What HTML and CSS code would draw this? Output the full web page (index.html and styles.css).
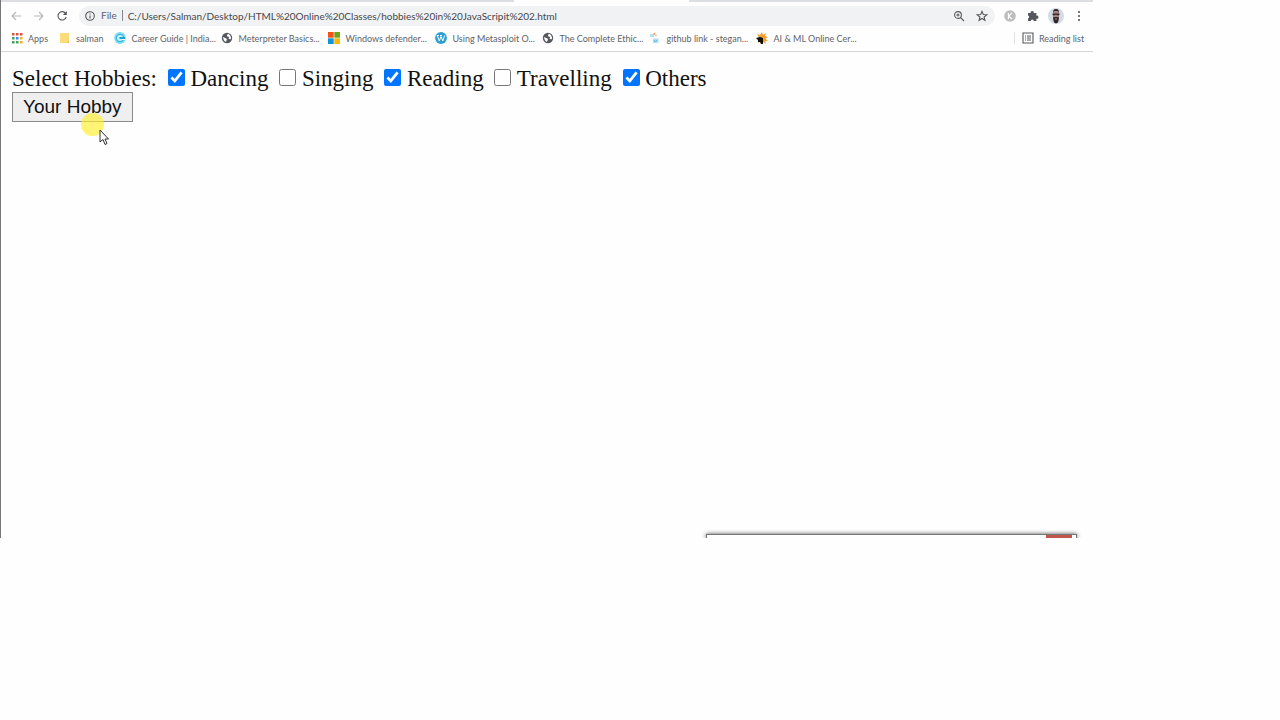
FILE: index.html
```html
<!DOCTYPE html>
<html lang="en">
<head>
    <meta charset="UTF-8">
    <meta name="viewport" content="width=device-width, initial-scale=1.0">
    <title>Hobbies in JavaScript</title>
    <link rel="stylesheet" href="styles.css">
</head>
<body>
    <div class="browser">
        <div class="tab-strip">
            <div class="active-tab"></div>
        </div>

        <div class="toolbar">
            <button class="icon-btn faded" aria-label="Back">
                <svg viewBox="0 0 12 12"><path d="M11 6H2M6 2L2 6l4 4"/></svg>
            </button>
            <button class="icon-btn faded" aria-label="Forward">
                <svg viewBox="0 0 12 12"><path d="M1 6h9M6 2l4 4-4 4"/></svg>
            </button>
            <button class="icon-btn" aria-label="Reload">
                <svg viewBox="0 0 12 12"><path d="M9.6 3.4A4.2 4.2 0 1 0 10.2 7"/><path class="solid" d="M10.8 1v4H6.8z"/></svg>
            </button>
            <div class="omnibox">
                <svg viewBox="0 0 12 12"><circle cx="6" cy="6" r="4.3"/><path d="M6 5.4v3M6 3.4v1.1"/></svg>
                <label for="address">File</label>
                <input type="text" id="address" value="C:/Users/Salman/Desktop/HTML%20Online%20Classes/hobbies%20in%20JavaScripit%202.html">
                <button class="icon-btn" aria-label="Zoom">
                    <svg viewBox="0 0 12 12"><circle cx="5" cy="5" r="3.4"/><path d="M7.6 7.6l3.4 3.4M3.4 5h3.2M5 3.4v3.2"/></svg>
                </button>
                <button class="icon-btn" aria-label="Bookmark this page">
                    <svg viewBox="0 0 12 12"><path d="M6 1.4l1.3 3.1 3.4.3-2.6 2.2.8 3.3L6 8.5l-2.9 1.8.8-3.3-2.6-2.2 3.4-.3z"/></svg>
                </button>
            </div>
            <button class="icon-btn" aria-label="Extension K">
                <svg viewBox="0 0 12 12"><circle class="grey" cx="6" cy="6" r="5.8"/><path class="letter" d="M4.4 3v6M8 3L4.6 6.2 8 9"/></svg>
            </button>
            <button class="icon-btn" aria-label="Extensions">
                <svg viewBox="0 0 12 12"><path class="solid" d="M1 3h2.8a1.5 1.5 0 1 1 2.8 0h2.8v2.8a1.5 1.5 0 1 1 0 2.8V11H6.8a1.5 1.5 0 0 0-3 0H1V8.4a1.5 1.5 0 0 0 0-2.9z"/></svg>
            </button>
            <button class="icon-btn avatar" aria-label="Profile">
                <svg viewBox="0 0 16 16"><circle cx="8" cy="8" r="8" fill="#d3dbe2"/><path d="M5 4q0-3 3-3t3 3v7q-1 4-3 4t-3-4z" fill="#a98486"/><path d="M5 5q0-4 3-4t3 4L10 3H6zM4.6 5.5h6.8v1.8H9L8 6.5l-1 .8H4.6zM5 9.5l2-.5h2l2 .5-1 5-2 1-2-1z" fill="#33272d"/><path d="M7 11h2" stroke="#a98486"/></svg>
            </button>
            <button class="icon-btn" aria-label="Menu">
                <svg viewBox="0 0 12 12"><circle class="solid" cx="6" cy="2" r="1.1"/><circle class="solid" cx="6" cy="6" r="1.1"/><circle class="solid" cx="6" cy="10" r="1.1"/></svg>
            </button>
        </div>

        <nav class="bookmarks">
            <a href="#" class="short">
                <svg viewBox="0 0 12 12"><path d="M1 1h2.5v2.5H1zM5 1h2.5v2.5H5zM9 1h2.5v2.5H9z" fill="#e0523f"/><path d="M1 5h2.5v2.5H1z" fill="#3fa35a"/><path d="M5 5h2.5v2.5H5z" fill="#4285f4"/><path d="M9 5h2.5v2.5H9z" fill="#eeb32b"/><path d="M1 9h2.5v2.5H1zM5 9h2.5v2.5H5z" fill="#3fa35a"/><path d="M9 9h2.5v2.5H9z" fill="#eeb32b"/></svg>
                <span>Apps</span>
            </a>
            <a href="#" class="short">
                <svg viewBox="0 0 12 12"><path d="M1 1h9v10H1z" fill="#fbdc7b"/><path d="M7 11h3V8z" fill="#efc95a"/></svg>
                <span>salman</span>
            </a>
            <a href="#">
                <svg viewBox="0 0 12 12"><circle cx="6" cy="6" r="5.9" fill="#7fdcf3"/><circle cx="6" cy="6" r="3.6" fill="#c9f1fb" stroke="#35b9dc" stroke-width="1.2"/><path d="M5.5 5H11v2H5.5z" fill="#1aa3cf"/><path d="M8 7.5h3" stroke="#fff"/></svg>
                <span>Career Guide | India...</span>
            </a>
            <a href="#">
                <svg viewBox="0 0 12 12"><circle cx="6" cy="6" r="5.2" fill="#55585c"/><path d="M1.8 5l3 1.2 1.2.8-1 3-2-1.5zM7 1.8L5.8 3.600l1 1.2h1.4L7.5 6.5l1.8 1 .9-1.5L9 3z" fill="#fff"/></svg>
                <span>Meterpreter Basics...</span>
            </a>
            <a href="#">
                <svg viewBox="0 0 12 12"><path d="M0 0h5.7v5.7H0z" fill="#f1511b"/><path d="M6.3 0H12v5.7H6.3z" fill="#6fa51c"/><path d="M0 6.3h5.7V12H0z" fill="#1294dc"/><path d="M6.3 6.3H12V12H6.3z" fill="#fbb90c"/></svg>
                <span>Windows defender...</span>
            </a>
            <a href="#">
                <svg viewBox="0 0 12 12"><circle cx="6" cy="6" r="5.9" fill="#2b9fd0"/><path d="M2.3 3.5l2 5.5L6 4.5 7.8 9l1.8-5.5M1.8 3.5h2M5 3.5h2" fill="none" stroke="#fff"/></svg>
                <span>Using Metasploit O...</span>
            </a>
            <a href="#">
                <svg viewBox="0 0 12 12"><circle cx="6" cy="6" r="5.2" fill="#55585c"/><path d="M1.8 5l3 1.2 1.2.8-1 3-2-1.5zM7 1.8L5.8 3.6l1 1.2h1.4L7.5 6.5l1.8 1 .9-1.5L9 3z" fill="#fff"/></svg>
                <span>The Complete Ethic...</span>
            </a>
            <a href="#">
                <svg viewBox="0 0 12 12"><path d="M1 2h4v3H1zM4 6.5h5.5V11H4z" fill="#b5def3"/><path d="M4.5.8h2v2h-2z" fill="#e8a36b"/><path d="M6 3.5h2" stroke="#f0c27c"/><path d="M5 8l1.5 2L8 8" fill="none" stroke="#5fb4e0"/></svg>
                <span>github link - stegan...</span>
            </a>
            <a href="#">
                <svg viewBox="0 0 12 12"><path d="M6 0l1 3 3-2-1 3 3 1-2.5 1.5L12 9 9 9l1 3-3-2-1 2-1-3-3 2 1-3-3-1 3-1.5L1 2l3 1z" fill="#f0a02e"/><path d="M0 6l4-1 3 1v6H5L4 10H2V8z" fill="#111"/></svg>
                <span>AI &amp; ML Online Cer...</span>
            </a>
            <button class="reading-list">
                <svg viewBox="0 0 12 12"><path d="M1 1h10v10H1zM3 4h1M5 4h4M3 6h1M5 6h4M3 8h1M5 8h4"/></svg>
                <span>Reading list</span>
            </button>
        </nav>

        <main class="page">
            <form>
                <div class="hobbies">
                    Select Hobbies:
                    <input type="checkbox" id="dancing" checked> <label for="dancing">Dancing</label>
                    <input type="checkbox" id="singing"> <label for="singing">Singing</label>
                    <input type="checkbox" id="reading" checked> <label for="reading">Reading</label>
                    <input type="checkbox" id="travelling"> <label for="travelling">Travelling</label>
                    <input type="checkbox" id="others" checked> <label for="others">Others</label>
                </div>
                <button type="button" class="hobby-btn">
                    Your Hobby
                    <span class="click-spot"></span>
                    <svg class="pointer" viewBox="0 0 10 17"><path d="M1 1v12l3-2.5 2 5 2-1-2-4.5h3.5z"/></svg>
                </button>
            </form>
        </main>

        <!-- top edge of the window that sits behind the bottom of the screen -->
        <div class="popup">
            <div class="popup-close"></div>
        </div>
    </div>
</body>
</html>
```

FILE: styles.css
```css
* {
    box-sizing: border-box;
}

body {
    margin: 0;
    background-color: #fefefe;
}

.browser {
    position: relative;
    display: flex;
    flex-direction: column;
    width: 85.4%;
    height: 74.7vh;
    border-left: 1px solid #77777a;
    background-color: #fefefe;
    font-family: Lato, "Noto Sans", sans-serif;
    font-size: 9px;
    color: #5f6368;
    overflow: hidden;
}

button {
    padding: 0;
    border: none;
    background: none;
    font: inherit;
    color: inherit;
}

svg {
    display: block;
    flex: none;
    width: 12px;
    height: 12px;
}

/* Tab strip */
.tab-strip {
    flex: none;
    height: 2px;
    background-color: #dcdee2;
}

.active-tab {
    width: 16%;
    height: 2px;
    margin-left: 47%;
    background-color: #fefefe;
}

/* Toolbar */
.toolbar {
    flex: none;
    display: flex;
    align-items: center;
    gap: 11px;
    height: 27px;
    padding: 0 8px 0 9px;
}

.toolbar svg,
.reading-list svg {
    fill: none;
    stroke: #55585c;
    stroke-width: 1.1;
}

.toolbar .faded svg {
    stroke: #b5b7ba;
}

svg .solid {
    fill: #55585c;
    stroke: none;
}

svg .grey {
    fill: #bdbdbd;
    stroke: none;
}

svg .letter {
    stroke: #fff;
}

.toolbar .avatar {
    margin: 0 -2px;
}

.toolbar .avatar svg {
    width: 16px;
    height: 16px;
    stroke: none;
}

.omnibox {
    flex: 1;
    display: flex;
    align-items: center;
    gap: 5px;
    height: 20px;
    margin-right: -2px;
    padding: 0 7px 0 5px;
    border-radius: 10px;
    background-color: #f1f2f4;
    font-size: 10px;
}

.omnibox label {
    padding-right: 5px;
    border-right: 1px solid #85888c;
    line-height: 11px;
}

.omnibox input {
    flex: 1;
    min-width: 0;
    padding: 0;
    border: none;
    outline: none;
    background: none;
    font: inherit;
    color: #45484c;
}

.omnibox .icon-btn {
    margin-left: 6px;
}

/* Bookmarks bar */
.bookmarks {
    flex: none;
    display: flex;
    align-items: center;
    gap: 11px;
    height: 23px;
    padding: 0 9px 4px 10px;
    border-bottom: 1px solid #d5d6d8;
    white-space: nowrap;
}

.bookmarks a {
    display: flex;
    align-items: center;
    gap: 5px;
    width: 96px;
    color: inherit;
    text-decoration: none;
}

.bookmarks .short {
    width: auto;
}

.reading-list {
    display: flex;
    align-items: center;
    gap: 5px;
    margin-left: auto;
    padding-left: 7px;
    border-left: 1px solid #e2e3e5;
}

/* Page content */
.page {
    padding: 13px 11px;
    font-family: "Liberation Serif", serif;
    font-size: 23px;
    line-height: 27px;
    color: #111;
}

.hobbies input {
    width: 17px;
    height: 17px;
    margin: 0 0 0 5px;
    accent-color: #0075ff;
}

.hobby-btn {
    position: relative;
    display: block;
    height: 30px;
    padding: 0 10px;
    border: 1px solid #8a8a8a;
    background-color: #efefef;
    font-family: "Liberation Sans", sans-serif;
    font-size: 19px;
    line-height: 26px;
    color: #111;
}

.click-spot {
    position: absolute;
    top: 20px;
    left: 68px;
    width: 23px;
    height: 23px;
    border-radius: 50%;
    background-color: rgba(255, 238, 40, 0.65);
}

.pointer {
    position: absolute;
    top: 36px;
    left: 86px;
    width: 10px;
    height: 17px;
    fill: #fff;
    stroke: #333;
}

/* Window peeking in at the bottom */
.popup {
    position: absolute;
    right: 16px;
    bottom: 0;
    width: 34%;
    height: 4px;
    border: 1px solid #777;
    border-bottom: none;
    background-color: #fefefe;
    box-shadow: 0 0 4px rgba(0, 0, 0, 0.7);
}

.popup-close {
    width: 26px;
    height: 3px;
    margin: 0 4px 0 auto;
    background-color: #c0564b;
}
```
